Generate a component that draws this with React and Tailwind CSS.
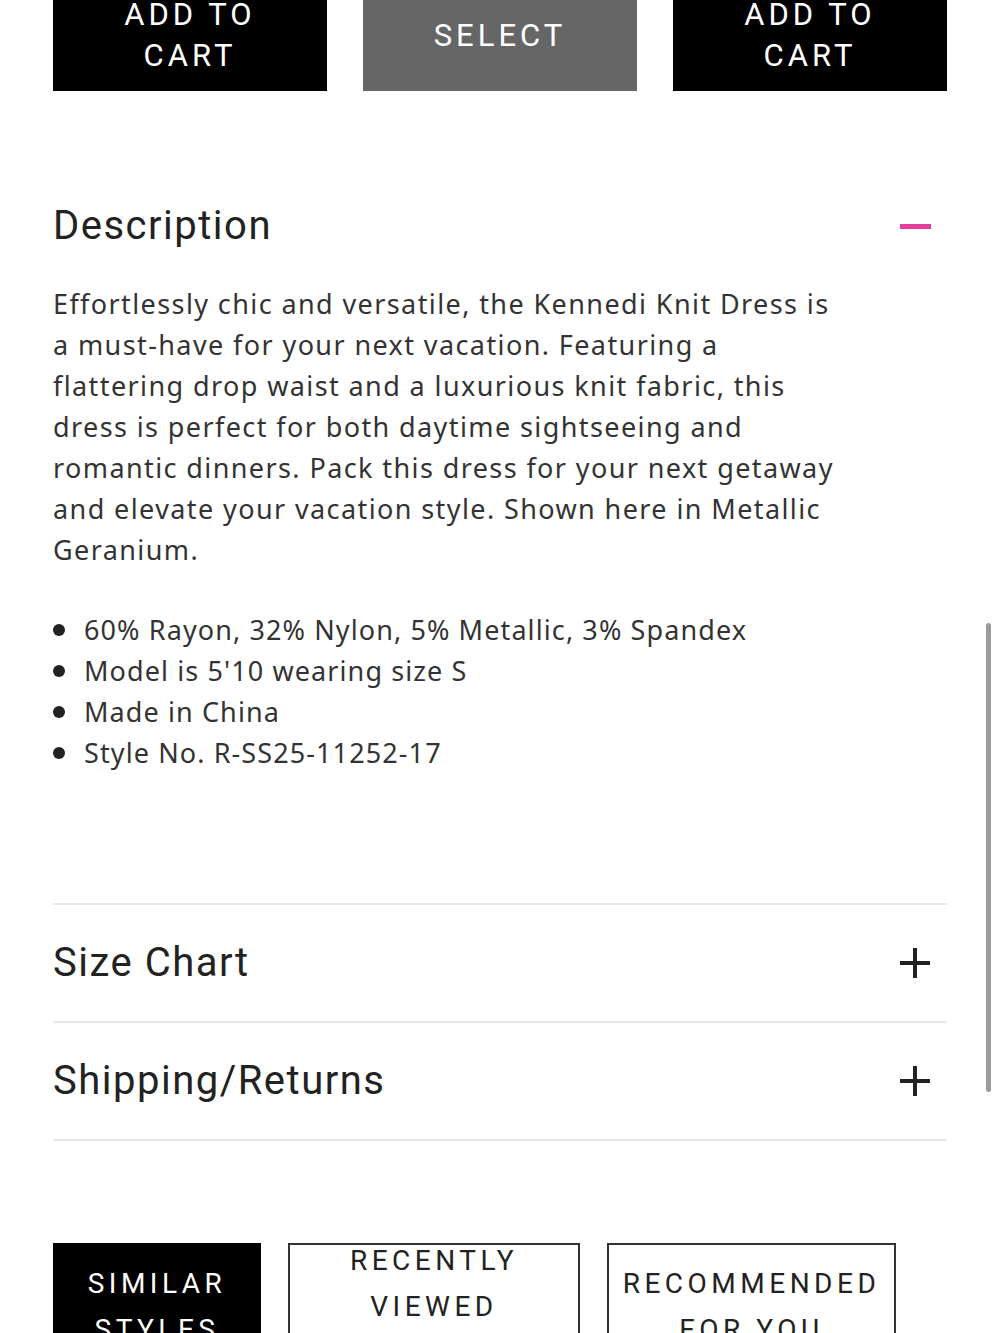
import React from 'react';

const body = { fontFamily: '"Noto Sans", "Open Sans", sans-serif' };

const Plus = () => (
  <svg width="34" height="34" viewBox="0 0 34 34" className="shrink-0">
    <path d="M17 2v30M2 17h30" stroke="#222" strokeWidth="4" />
  </svg>
);

const Accordion = ({ title }) => (
  <div className="flex items-center justify-between h-[118px] border-b-2 border-[#e8e8e8] pr-[15px]">
    <h3 className="text-[40px] leading-[48px] text-[#222] tracking-[1.5px] font-[Roboto,sans-serif]">{title}</h3>
    <Plus />
  </div>
);

const lines = [
  'Effortlessly chic and versatile, the Kennedi Knit Dress is',
  'a must-have for your next vacation. Featuring a',
  'flattering drop waist and a luxurious knit fabric, this',
  'dress is perfect for both daytime sightseeing and',
  'romantic dinners. Pack this dress for your next getaway',
  'and elevate your vacation style. Shown here in Metallic',
  'Geranium.',
];

const App = () => {
  return (
    <div className="relative w-[1000px] h-[1333px] overflow-hidden bg-white">
      <div className="px-[53px]">
        {/* buttons, scrolled partly out of view */}
        <div className="-mt-[21px] grid grid-cols-3 gap-[36px] font-[Roboto,sans-serif] text-white text-[31px] leading-[41px] tracking-[4px]">
          <button className="h-[112px] bg-black flex items-center justify-center text-center">ADD TO<br />CART</button>
          <button className="h-[112px] bg-[#666] flex items-center justify-center text-center">SELECT</button>
          <button className="h-[112px] bg-black flex items-center justify-center text-center">ADD TO<br />CART</button>
        </div>

        {/* description */}
        <div className="mt-[111px] flex items-center justify-between pr-[16px]">
          <h2 className="text-[40px] leading-[48px] text-[#222] tracking-[1.5px] font-[Roboto,sans-serif]">Description</h2>
          <span className="w-[31px] h-[5px] bg-[#e2409c]" />
        </div>
        <p style={body} className="mt-[33px] text-[27px] leading-[41px] tracking-[1.4px] text-[#333]">
          {lines.map((l) => (
            <span key={l} className="block">{l}</span>
          ))}
        </p>
        <ul style={body} className="mt-[39px] text-[27px] leading-[41px] tracking-[1.1px] text-[#333]">
          {['60% Rayon, 32% Nylon, 5% Metallic, 3% Spandex', "Model is 5'10 wearing size S", 'Made in China', 'Style No. R-SS25-11252-17'].map((t) => (
            <li key={t} className="flex items-center gap-[19px]">
              <span className="w-[12px] h-[12px] rounded-full bg-[#222] shrink-0" />
              {t}
            </li>
          ))}
        </ul>

        <div className="mt-[130px] border-t-2 border-[#e8e8e8]">
          <Accordion title="Size Chart" />
          <Accordion title="Shipping/Returns" />
        </div>

        {/* tabs */}
        <div className="mt-[102px] flex gap-[27px] font-[Roboto,sans-serif] text-[28px] leading-[46px] tracking-[4.5px] text-center">
          <div className="w-[208px] h-[140px] bg-black text-white pt-[18px]">SIMILAR<br />STYLES</div>
          <div className="w-[292px] h-[140px] border-2 border-[#333] text-[#222]">
            <div className="-mt-[7px]">RECENTLY<br />VIEWED</div>
          </div>
          <div className="w-[289px] h-[140px] border-2 border-[#333] text-[#222] pt-[16px]">RECOMMENDED<br />FOR YOU</div>
        </div>
      </div>

      {/* overlay scrollbar */}
      <div className="absolute left-[986px] top-[623px] w-[5px] h-[469px] rounded-full bg-[#9a9a9a]" />
    </div>
  );
};

export default App;
